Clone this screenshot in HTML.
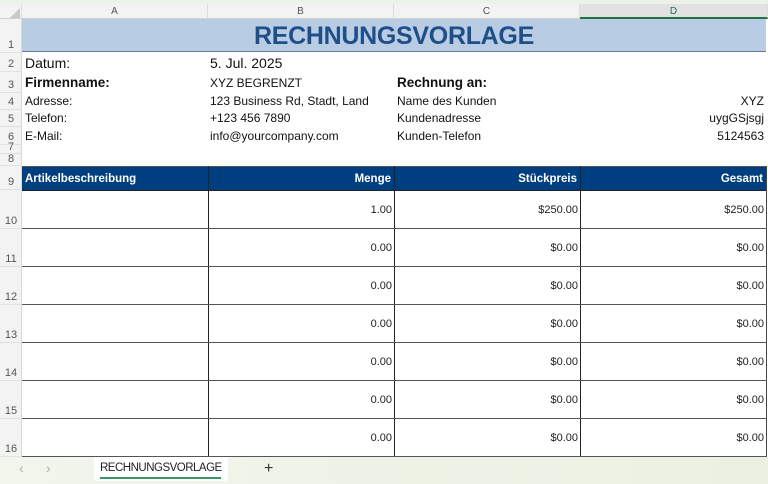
<!DOCTYPE html>
<html><head><meta charset="utf-8"><style>
*{margin:0;padding:0;box-sizing:border-box}
body{width:768px;height:484px;overflow:hidden;background:#fff;font-family:"Liberation Sans",sans-serif;position:relative}
.a{position:absolute}
.ch{top:4px;height:15px;background:#f3f3f3;border-right:1px solid #dcdcdc;border-bottom:1px solid #d0d0d0;font-size:10px;color:#555;text-align:center;line-height:15px}
.rh{left:0;width:22px;background:#f3f3f3;border-bottom:1px solid #e0e0e0;font-size:11px;color:#555;text-align:center}
.t{font-size:12px;color:#111;white-space:nowrap}
.n{font-size:11px;color:#222;text-align:right;white-space:nowrap}
.h{font-size:11.5px;font-weight:bold;color:#fff;white-space:nowrap}
</style></head><body>
<div class="a" style="left:0;top:0;width:768px;height:4px;background:#eef3ea"></div>
<div class="a ch" style="left:0;width:22px"></div>
<svg class="a" style="left:10px;top:8px" width="10" height="10"><polygon points="10,0 10,10 0,10" fill="#c8c8c8"/></svg>
<div class="a ch" style="left:22px;width:186px">A</div>
<div class="a ch" style="left:208px;width:186px">B</div>
<div class="a ch" style="left:394px;width:186px">C</div>
<div class="a ch" style="left:580px;width:188px;background:#e2e2e2;border-bottom:2px solid #217346;color:#217346">D</div>
<div class="a" style="left:0;top:19px;width:22px;height:438px;background:#f3f3f3;border-right:1px solid #d8d8d8"></div>
<div class="a rh" style="top:38px;line-height:14px;background:none">1</div>
<div class="a rh" style="top:57px;line-height:14px;background:none">2</div>
<div class="a rh" style="top:78px;line-height:14px;background:none">3</div>
<div class="a rh" style="top:95px;line-height:14px;background:none">4</div>
<div class="a rh" style="top:112px;line-height:14px;background:none">5</div>
<div class="a rh" style="top:130px;line-height:14px;background:none">6</div>
<div class="a rh" style="top:141px;line-height:12px;background:none">7</div>
<div class="a rh" style="top:153px;line-height:12px;background:none">8</div>
<div class="a rh" style="top:175px;line-height:14px;background:none">9</div>
<div class="a rh" style="top:214px;line-height:14px;background:none">10</div>
<div class="a rh" style="top:252px;line-height:14px;background:none">11</div>
<div class="a rh" style="top:290px;line-height:14px;background:none">12</div>
<div class="a rh" style="top:328px;line-height:14px;background:none">13</div>
<div class="a rh" style="top:366px;line-height:14px;background:none">14</div>
<div class="a rh" style="top:404px;line-height:14px;background:none">15</div>
<div class="a rh" style="top:442px;line-height:14px;background:none">16</div>
<div class="a" style="left:22px;top:19px;width:744px;height:33px;background:#b8cce4;border-bottom:1px solid #6b7a8c;text-align:center;font-size:25px;font-weight:bold;color:#1f4e89;line-height:34px;letter-spacing:-0.3px">RECHNUNGSVORLAGE</div>
<div class="a t" style="left:25px;top:55px;font-size:14px">Datum:</div>
<div class="a t" style="left:210px;top:55px;font-size:14px">5. Jul. 2025</div>
<div class="a t" style="left:25px;top:75px;font-size:13.5px;font-weight:bold">Firmenname:</div>
<div class="a t" style="left:210px;top:76px">XYZ BEGRENZT</div>
<div class="a t" style="left:397px;top:75px;font-size:13.5px;font-weight:bold">Rechnung an:</div>
<div class="a t" style="left:25px;top:94px">Adresse:</div>
<div class="a t" style="left:210px;top:94px">123 Business Rd, Stadt, Land</div>
<div class="a t" style="left:397px;top:94px">Name des Kunden</div>
<div class="a t" style="left:600px;top:94px;width:164px;text-align:right">XYZ</div>
<div class="a t" style="left:25px;top:111px">Telefon:</div>
<div class="a t" style="left:210px;top:111px">+123 456 7890</div>
<div class="a t" style="left:397px;top:111px">Kundenadresse</div>
<div class="a t" style="left:600px;top:111px;width:164px;text-align:right">uygGSjsgj</div>
<div class="a t" style="left:25px;top:129px">E-Mail:</div>
<div class="a t" style="left:210px;top:129px">info@yourcompany.com</div>
<div class="a t" style="left:397px;top:129px">Kunden-Telefon</div>
<div class="a t" style="left:600px;top:129px;width:164px;text-align:right">5124563</div>
<div class="a" style="left:22px;top:166px;width:744px;height:25px;background:#003f7f;border-top:1px solid #555;border-bottom:1px solid #222"></div>
<div class="a h" style="left:25px;top:173px">Artikelbeschreibung</div>
<div class="a h" style="left:250px;top:173px;width:141px;text-align:right">Menge</div>
<div class="a h" style="left:430px;top:173px;width:147px;text-align:right">Stückpreis</div>
<div class="a h" style="left:610px;top:173px;width:153px;text-align:right">Gesamt</div>
<div class="a" style="left:208px;top:166px;width:1px;height:291px;background:#222"></div>
<div class="a" style="left:394px;top:166px;width:1px;height:291px;background:#222"></div>
<div class="a" style="left:580px;top:166px;width:1px;height:291px;background:#222"></div>
<div class="a" style="left:766px;top:166px;width:1px;height:291px;background:#444"></div>
<div class="a" style="left:22px;top:228px;width:745px;height:1px;background:#555"></div>
<div class="a" style="left:22px;top:266px;width:745px;height:1px;background:#555"></div>
<div class="a" style="left:22px;top:304px;width:745px;height:1px;background:#555"></div>
<div class="a" style="left:22px;top:342px;width:745px;height:1px;background:#555"></div>
<div class="a" style="left:22px;top:380px;width:745px;height:1px;background:#555"></div>
<div class="a" style="left:22px;top:418px;width:745px;height:1px;background:#555"></div>
<div class="a" style="left:22px;top:456px;width:745px;height:1px;background:#555"></div>
<div class="a n" style="left:300px;top:204px;width:92px">1.00</div>
<div class="a n" style="left:480px;top:204px;width:98px">$250.00</div>
<div class="a n" style="left:660px;top:204px;width:104px">$250.00</div>
<div class="a n" style="left:300px;top:242px;width:92px">0.00</div><div class="a n" style="left:480px;top:242px;width:98px">$0.00</div><div class="a n" style="left:660px;top:242px;width:104px">$0.00</div>
<div class="a n" style="left:300px;top:280px;width:92px">0.00</div><div class="a n" style="left:480px;top:280px;width:98px">$0.00</div><div class="a n" style="left:660px;top:280px;width:104px">$0.00</div>
<div class="a n" style="left:300px;top:318px;width:92px">0.00</div><div class="a n" style="left:480px;top:318px;width:98px">$0.00</div><div class="a n" style="left:660px;top:318px;width:104px">$0.00</div>
<div class="a n" style="left:300px;top:356px;width:92px">0.00</div><div class="a n" style="left:480px;top:356px;width:98px">$0.00</div><div class="a n" style="left:660px;top:356px;width:104px">$0.00</div>
<div class="a n" style="left:300px;top:394px;width:92px">0.00</div><div class="a n" style="left:480px;top:394px;width:98px">$0.00</div><div class="a n" style="left:660px;top:394px;width:104px">$0.00</div>
<div class="a n" style="left:300px;top:432px;width:92px">0.00</div><div class="a n" style="left:480px;top:432px;width:98px">$0.00</div><div class="a n" style="left:660px;top:432px;width:104px">$0.00</div>
<div class="a" style="left:0;top:457px;width:768px;height:27px;background:linear-gradient(90deg,#f2f5ec,#eaf1e2)"></div>
<div class="a" style="left:19px;top:460px;font-size:14px;color:#aaa">‹</div>
<div class="a" style="left:46px;top:460px;font-size:14px;color:#aaa">›</div>
<div class="a" style="left:94px;top:457px;width:134px;height:24px;background:#fff;border-radius:0 0 3px 3px"></div>
<div class="a" style="left:100px;top:462px;font-size:11.5px;color:#222;letter-spacing:-0.5px">RECHNUNGSVORLAGE</div>
<div class="a" style="left:100px;top:477px;width:121px;height:2px;background:#3b9464"></div>
<div class="a" style="left:264px;top:460px;font-size:16px;color:#333">+</div>
</body></html>
